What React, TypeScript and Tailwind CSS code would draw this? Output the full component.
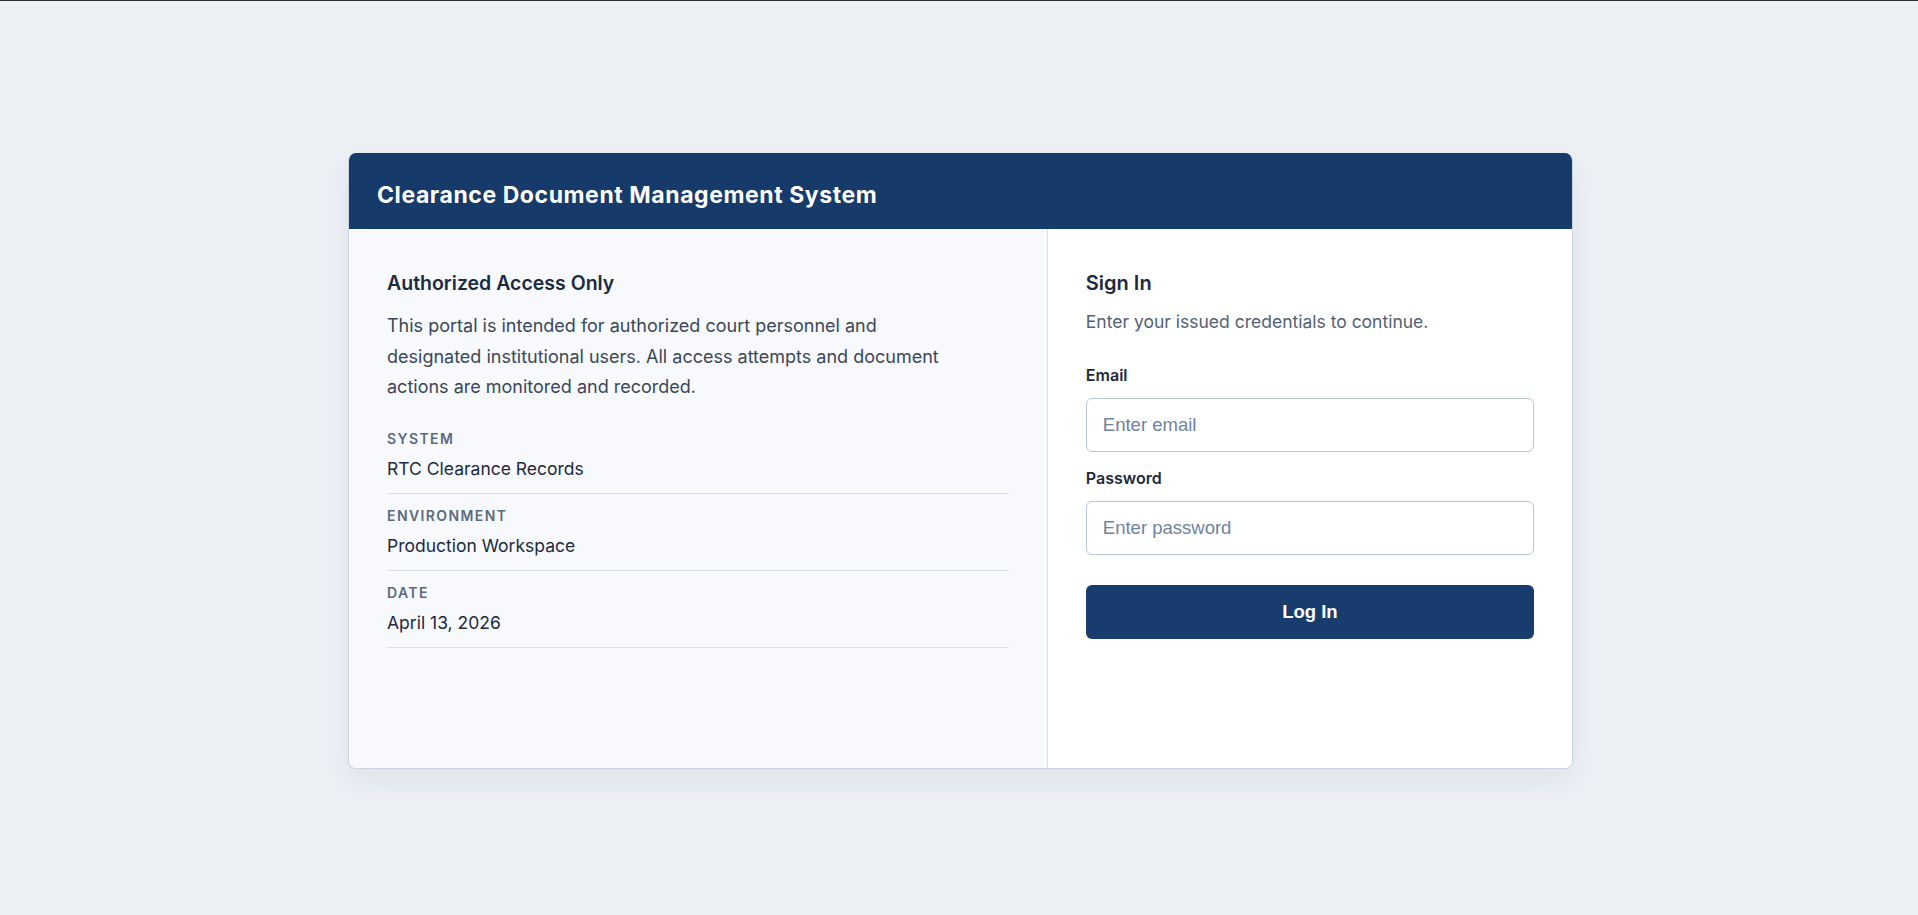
import { useState } from "react";

const details = [
  { label: "System", value: "RTC Clearance Records" },
  { label: "Environment", value: "Production Workspace" },
  { label: "Date", value: "April 13, 2026" },
];

const AccessNotice = () => (
  <section className="border-r border-[#d9e0ea] bg-[#f7f9fc] px-[38px] pt-[40px]">
    <h2 className="text-[19.5px] font-semibold leading-[28px] text-[#1b2a41]">
      Authorized Access Only
    </h2>
    <p className="mt-[14px] max-w-[580px] text-[18px] leading-[30.6px] text-[#3b4759]">
      This portal is intended for authorized court personnel and designated
      institutional users. All access attempts and document actions are
      monitored and recorded.
    </p>
    <dl className="mt-[14px]">
      {details.map((item) => (
        <div
          key={item.label}
          className="border-b border-[#d9e0ea] pt-3 pb-[11px]"
        >
          <dt className="text-[14px] font-semibold uppercase leading-5 tracking-[0.1em] text-[#5a6a80]">
            {item.label}
          </dt>
          <dd className="mt-[7px] text-[17.5px] leading-[26px] text-[#1c2940]">
            {item.value}
          </dd>
        </div>
      ))}
    </dl>
  </section>
);

const SignInForm = () => {
  const [email, setEmail] = useState("");
  const [password, setPassword] = useState("");

  return (
    <section className="bg-white px-[38px] pt-[40px]">
      <h2 className="text-[20px] font-semibold leading-[28px] text-[#1b2a41]">
        Sign In
      </h2>
      <p className="mt-3 text-[17.5px] leading-[26px] text-[#526176]">
        Enter your issued credentials to continue.
      </p>
      <form
        className="mt-[29px] flex flex-col"
        onSubmit={(e) => e.preventDefault()}
      >
        <label
          htmlFor="email"
          className="mb-3 text-[16px] font-semibold leading-[22px] text-[#1e2a3c]"
        >
          Email
        </label>
        <input
          id="email"
          type="email"
          value={email}
          onChange={(e) => setEmail(e.target.value)}
          placeholder="Enter email"
          className="h-[54px] rounded-md border border-[#b8c5d7] bg-white px-4 font-['Liberation_Sans',Arial,sans-serif] text-[18.5px] text-[#1c2940] outline-none placeholder:text-[#6f82a0]"
        />
        <label
          htmlFor="password"
          className="mt-[15px] mb-3 text-[16px] font-semibold leading-[22px] text-[#1e2a3c]"
        >
          Password
        </label>
        <input
          id="password"
          type="password"
          value={password}
          onChange={(e) => setPassword(e.target.value)}
          placeholder="Enter password"
          className="h-[54px] rounded-md border border-[#b8c5d7] bg-white px-4 font-['Liberation_Sans',Arial,sans-serif] text-[18.5px] text-[#1c2940] outline-none placeholder:text-[#6f82a0]"
        />
        <button
          type="submit"
          className="mt-[30px] h-[54px] rounded-md bg-[#183c6d] font-['Liberation_Sans',Arial,sans-serif] text-[18.5px] font-bold text-white"
        >
          Log In
        </button>
      </form>
    </section>
  );
};

export default function App() {
  return (
    <div className="flex min-h-screen flex-col bg-[#edf1f6] font-['Inter','Noto_Sans',sans-serif]">
      <div className="h-px bg-[#2b2c30]" />
      <main className="flex flex-1 items-center justify-center pt-[6px] pl-[3px]">
        <div className="w-[1225px] overflow-hidden rounded-lg border border-t-0 border-[#cbd4e0] shadow-[0_12px_32px_rgba(30,50,90,0.08)]">
          <header className="h-[76px] bg-[#163a6a] px-7 pt-[26px]">
            <h1 className="text-[23px] font-bold leading-[32px] tracking-[0.025em] text-white">
              Clearance Document Management System
            </h1>
          </header>
          <div className="grid h-[539px] grid-cols-[4fr_3fr]">
            <AccessNotice />
            <SignInForm />
          </div>
        </div>
      </main>
    </div>
  );
}
